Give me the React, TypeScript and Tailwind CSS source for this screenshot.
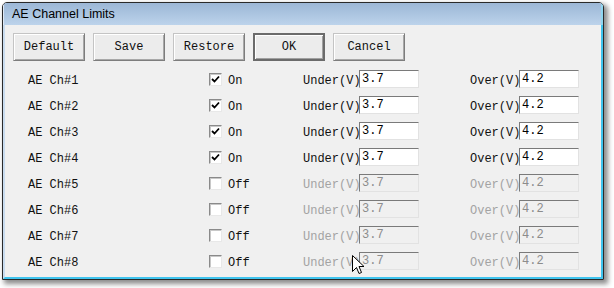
import React from "react";

const mono = { fontFamily: '"Liberation Mono", "Courier New", monospace' };

const channels = [
  { name: "AE Ch#1", on: true },
  { name: "AE Ch#2", on: true },
  { name: "AE Ch#3", on: true },
  { name: "AE Ch#4", on: true },
  { name: "AE Ch#5", on: false },
  { name: "AE Ch#6", on: false },
  { name: "AE Ch#7", on: false },
  { name: "AE Ch#8", on: false },
];

const Button = ({ label, primary }: { label: string; primary?: boolean }) => (
  <button
    className={
      "w-[72px] h-[28px] bg-[#ececec] text-[12px] text-[#111] flex items-center justify-center " +
      (primary
        ? "border-2 border-[#6b6b6b] shadow-[inset_1px_1px_0_#ffffff,inset_-1px_-1px_0_#a0a0a0]"
        : "border border-t-[#c4c4c4] border-l-[#c4c4c4] border-r-[#7d7d7d] border-b-[#7d7d7d] shadow-[inset_1px_1px_0_#ffffff,inset_-1px_-1px_0_#a8a8a8]")
    }
    style={mono}
  >
    {label}
  </button>
);

const Checkbox = ({ checked }: { checked: boolean }) => (
  <div className="w-[13px] h-[13px] bg-white border border-t-[#8a8a8a] border-l-[#8a8a8a] border-r-[#e8e8e8] border-b-[#e8e8e8] shadow-[inset_1px_1px_0_#c8c8c8] flex items-center justify-center">
    {checked && (
      <svg width="9" height="9" viewBox="0 0 9 9">
        <path d="M1 4 L3.5 6.5 L8 1.5" stroke="#000" strokeWidth="1.8" fill="none" />
      </svg>
    )}
  </div>
);

const Field = ({ value, enabled }: { value: string; enabled: boolean }) => (
  <div
    className={
      "w-[60px] h-[18px] border border-t-[#7a7a7a] border-l-[#7a7a7a] border-r-[#e2e2e2] border-b-[#e2e2e2] pl-[2px] flex items-center text-[12px] " +
      (enabled ? "bg-white text-black" : "bg-[#f0f0f0] text-[#8c8c8c]")
    }
    style={mono}
  >
    {value}
  </div>
);

export default function App() {
  return (
    <div className="w-[614px] h-[288px] bg-white relative">
      <div className="absolute left-[2px] top-[2px] w-[602px] h-[278px] border border-[#2a2a2a] rounded-t-[5px] shadow-[3px_3px_5px_1px_rgba(0,0,0,0.45)] flex flex-col overflow-hidden">
        {/* title bar */}
        <div className="h-[22px] bg-gradient-to-b from-[#9cb7d6] to-[#bcd3eb] flex items-center pl-[8px] border-l border-l-[#dfe9f5] border-r-2 border-r-[#8fd6f0]">
          <span
            className="text-[12.5px] text-black"
            style={{ fontFamily: '"Liberation Sans", Arial, sans-serif' }}
          >
            AE Channel Limits
          </span>
        </div>
        {/* client */}
        <div className="flex-1 bg-[#f0f0f0] border-l-2 border-l-[#c9dcef] border-r-2 border-r-[#3fc4ee] border-b-2 border-b-[#3fc4ee]">
          <div className="flex gap-[8px] pl-[8px] pt-[8px]">
            <Button label="Default" />
            <Button label="Save" />
            <Button label="Restore" />
            <Button label="OK" primary />
            <Button label="Cancel" />
          </div>
          <div className="mt-[5px] flex flex-col" style={mono}>
            {channels.map((c) => {
              const dim = c.on ? "text-[#111]" : "text-[#a3a3a3]";
              return (
                <div key={c.name} className="h-[26px] flex items-center pl-[23px] text-[12px] whitespace-nowrap">
                  <span className="w-[181px] pt-[3px] text-[#111]">{c.name}</span>
                  <Checkbox checked={c.on} />
                  <span className="w-[75px] ml-[6px] pt-[3px] text-[#111]">{c.on ? "On" : "Off"}</span>
                  <span className={"w-[56px] pt-[3px] " + dim}>Under(V)</span>
                  <Field value="3.7" enabled={c.on} />
                  <span className={"w-[49px] ml-[51px] pt-[3px] " + dim}>Over(V)</span>
                  <Field value="4.2" enabled={c.on} />
                </div>
              );
            })}
          </div>
        </div>
      </div>
      {/* mouse cursor */}
      <svg className="absolute left-[352px] top-[255px]" width="13" height="21" viewBox="0 0 13 21">
        <path
          d="M0.5 0.5 L0.5 16.5 L4.5 12.5 L7 18.5 L9.5 17.5 L7 11.5 L12 11.5 Z"
          fill="#fff"
          stroke="#000"
          strokeWidth="1"
        />
      </svg>
    </div>
  );
}
